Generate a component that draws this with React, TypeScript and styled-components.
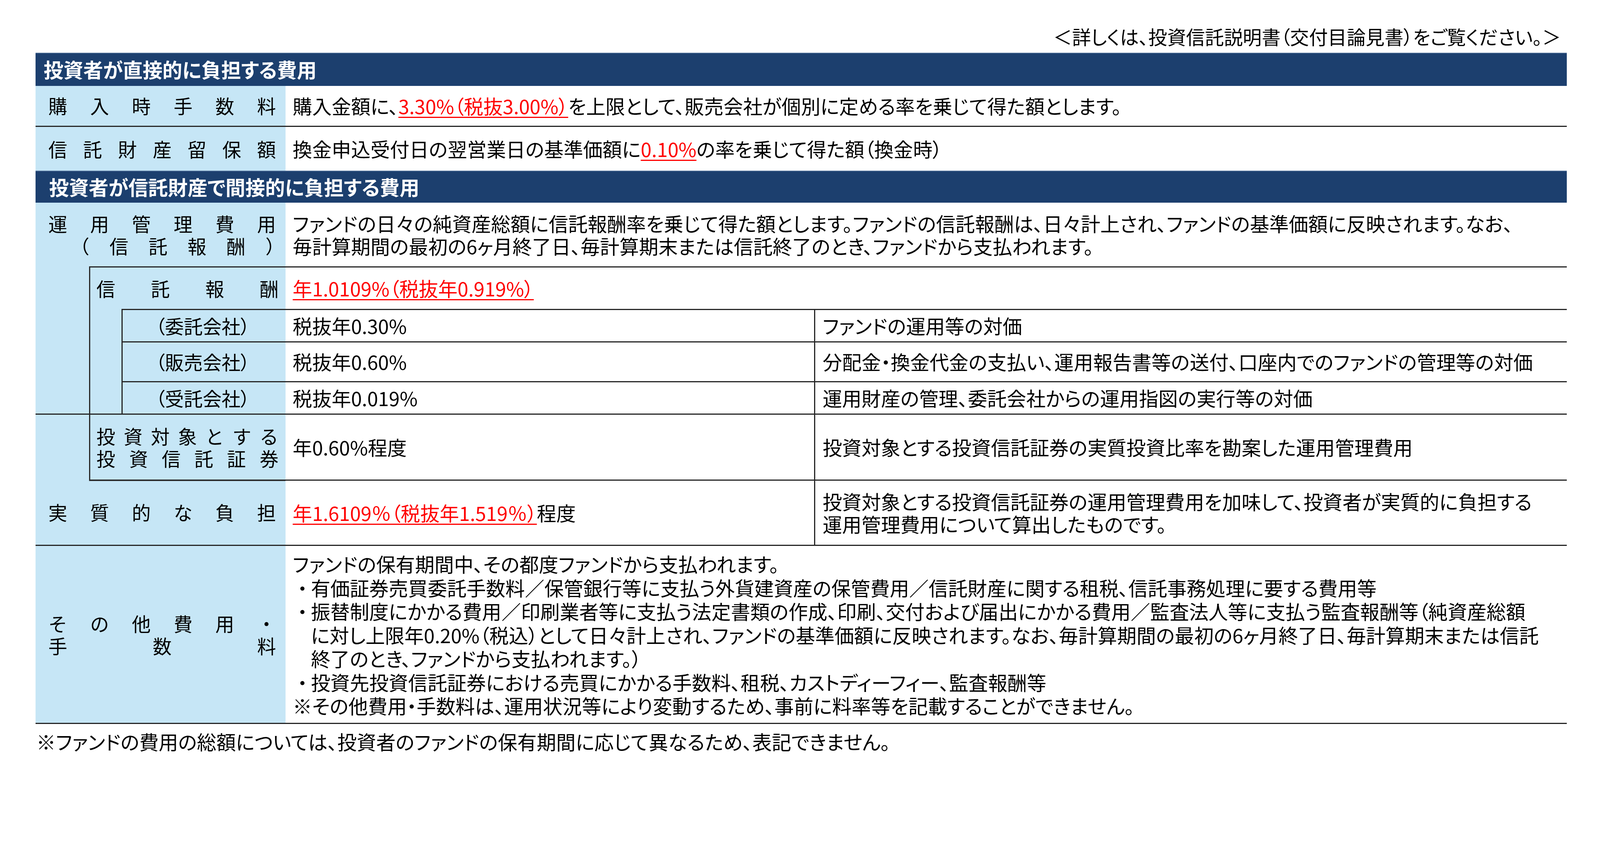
import React from "react";
import styled, { createGlobalStyle, css } from "styled-components";

const NAVY = "#1c3f6e";
const SKY = "#c6e6f6";
const RULE = "#262626";
const RED = "#ff0000";

// sizes are given in picture pixels of a 4400px wide frame; 1rem = 10 of them
const u = (n: number) => `${n / 10}rem`;

const GlobalStyle = createGlobalStyle`
  html { font-size: calc(100vw / 440); }
  html, body { margin: 0; padding: 0; background: #ffffff; }
  body {
    font-family: "Noto Sans CJK JP", "Noto Sans", sans-serif;
    color: #000000;
    overflow: hidden;
  }
`;

type Place = { $c: string; $r: string; $rule?: boolean; $bar?: boolean };

const place = css<Place>`
  grid-column: ${(p) => p.$c};
  grid-row: ${(p) => p.$r};
  border-top: ${(p) => (p.$rule ? `${u(4)} solid ${RULE}` : "0")};
  border-left: ${(p) => (p.$bar ? `${u(4)} solid ${RULE}` : "0")};
`;

const Page = styled.div`
  width: ${u(4211)};
  padding: ${u(70)} 0 ${u(60)} ${u(98)};
  font-size: ${u(53.5)};
  font-weight: 400;
  font-feature-settings: "palt";
`;

const Note = styled.div`
  text-align: right;
  height: ${u(62)};
  line-height: ${u(62)};
  margin: 0 ${u(16)} ${u(13)} 0;
  font-size: ${u(52)};
  white-space: nowrap;
`;

const Table = styled.div`
  display: grid;
  grid-template-columns: ${u(147)} ${u(92)} ${u(448)} ${u(1454)} ${u(2070)};
  grid-template-rows: ${[91, 110, 124, 88, 175, 117, 89, 109, 90, 181, 180, 490].map(u).join(" ")};
  border-bottom: ${u(4)} solid ${RULE};
`;

const Head = styled.div<{ $r: string; $indent: number }>`
  grid-column: 1 / -1;
  grid-row: ${(p) => p.$r};
  background: ${NAVY};
  box-shadow: inset 0 ${u(2)} 0 #55759d;
  color: #ffffff;
  font-size: ${u(54.5)};
  font-weight: 700;
  display: flex;
  align-items: center;
  padding-left: ${(p) => u(p.$indent)};
  white-space: nowrap;
`;

const Label = styled.div<Place & { $nested?: boolean; $ruleFrom?: number }>`
  ${place}
  background: ${(p) =>
    p.$ruleFrom != null
      ? `linear-gradient(${RULE}, ${RULE}) ${u(p.$ruleFrom)} 0 / calc(100% - ${u(p.$ruleFrom)}) ${u(4)} no-repeat, ${SKY}`
      : SKY};
  display: flex;
  flex-direction: column;
  justify-content: center;
  padding: 0 ${(p) => u(p.$nested ? 19 : 26)} 0 ${(p) => u(p.$nested ? 17 : 35)};
  font-size: ${u(52)};
  line-height: ${u(61)};
  font-feature-settings: normal;
`;

const SubLabel = styled.div<Place>`
  ${place}
  background: ${SKY};
  display: flex;
  align-items: center;
  justify-content: center;
  padding-right: ${u(7)};
  font-size: ${u(52)};
  white-space: nowrap;
`;

const Gutter = styled.div<Place & { $barRight?: boolean }>`
  ${place}
  background: ${SKY};
  border-right: ${(p) => (p.$barRight ? `${u(4)} solid ${RULE}` : "0")};
`;

const Cell = styled.div<Place & { $lh?: number }>`
  ${place}
  background: #ffffff;
  display: flex;
  align-items: center;
  padding-left: ${u(20)};
  line-height: ${(p) => u(p.$lh ?? 62)};
  white-space: nowrap;
`;

const Txt = styled.div``;

const Hot = styled.span`
  color: ${RED};
  text-decoration: underline;
  text-decoration-thickness: ${u(3)};
  text-underline-offset: ${u(8)};
`;

const Spread = styled.div<{ $ml?: number; $mr?: number }>`
  display: flex;
  justify-content: space-between;
  margin-left: ${(p) => u(p.$ml ?? 0)};
  margin-right: ${(p) => u(p.$mr ?? 0)};
`;

const Item = styled.div`
  display: grid;
  grid-template-columns: ${u(50)} auto;
`;

const Dot = styled.span`
  font-feature-settings: normal;
`;

const Foot = styled.div`
  margin-top: ${u(17)};
  line-height: ${u(62)};
  padding-left: ${u(2)};
  white-space: nowrap;
`;

function Spaced({ text, ml, mr }: { text: string; ml?: number; mr?: number }) {
  return (
    <Spread $ml={ml} $mr={mr}>
      {Array.from(text).map((ch, i) => (
        <span key={i}>{ch}</span>
      ))}
    </Spread>
  );
}

const shares = [
  { who: "（委託会社）", rate: "税抜年0.30%", note: "ファンドの運用等の対価" },
  {
    who: "（販売会社）",
    rate: "税抜年0.60%",
    note: "分配金・換金代金の支払い、運用報告書等の送付、口座内でのファンドの管理等の対価",
  },
  { who: "（受託会社）", rate: "税抜年0.019%", note: "運用財産の管理、委託会社からの運用指図の実行等の対価" },
];

export default function App() {
  return (
    <>
      <GlobalStyle />
      <Page>
        <Note>＜詳しくは、投資信託説明書（交付目論見書）をご覧ください。＞</Note>
        <Table>
          <Head $r="1" $indent={22}>投資者が直接的に負担する費用</Head>

          <Label $c="1 / 4" $r="2">
            <Spaced text="購入時手数料" />
          </Label>
          <Cell $c="4 / 6" $r="2">
            <Txt>
              購入金額に、<Hot>3.30%（税抜3.00%）</Hot>を上限として、販売会社が個別に定める率を乗じて得た額とします。
            </Txt>
          </Cell>

          <Label $c="1 / 4" $r="3" $rule>
            <Spaced text="信託財産留保額" />
          </Label>
          <Cell $c="4 / 6" $r="3" $rule>
            <Txt>
              換金申込受付日の翌営業日の基準価額に<Hot>0.10%</Hot>の率を乗じて得た額（換金時）
            </Txt>
          </Cell>

          <Head $r="4" $indent={37}>投資者が信託財産で間接的に負担する費用</Head>

          <Label $c="1 / 4" $r="5">
            <Spaced text="運用管理費用" />
            <Spaced text="（信託報酬）" ml={61} mr={-23} />
          </Label>
          <Cell $c="4 / 6" $r="5">
            <Txt>
              ファンドの日々の純資産総額に信託報酬率を乗じて得た額とします。ファンドの信託報酬は、日々計上され、ファンドの基準価額に反映されます。なお、
              <br />
              毎計算期間の最初の6ヶ月終了日、毎計算期末または信託終了のとき、ファンドから支払われます。
            </Txt>
          </Cell>

          <Gutter $c="1 / 2" $r="6 / 10" />
          <Label $c="2 / 4" $r="6" $rule $bar $nested>
            <Spaced text="信託報酬" />
          </Label>
          <Cell $c="4 / 6" $r="6" $rule>
            <Txt>
              <Hot>年1.0109%（税抜年0.919%）</Hot>
            </Txt>
          </Cell>

          <Gutter $c="2 / 3" $r="7 / 10" $bar $barRight />
          {shares.map((s, i) => (
            <React.Fragment key={s.who}>
              <SubLabel $c="3 / 4" $r={String(7 + i)} $rule>
                {s.who}
              </SubLabel>
              <Cell $c="4 / 5" $r={String(7 + i)} $rule>
                <Txt>{s.rate}</Txt>
              </Cell>
              <Cell $c="5 / 6" $r={String(7 + i)} $rule $bar>
                <Txt>{s.note}</Txt>
              </Cell>
            </React.Fragment>
          ))}

          <Gutter $c="1 / 2" $r="10" $rule />
          <Label $c="2 / 4" $r="10" $rule $bar $nested>
            <Spaced text="投資対象とする" />
            <Spaced text="投資信託証券" />
          </Label>
          <Cell $c="4 / 5" $r="10" $rule>
            <Txt>年0.60%程度</Txt>
          </Cell>
          <Cell $c="5 / 6" $r="10" $rule $bar>
            <Txt>投資対象とする投資信託証券の実質投資比率を勘案した運用管理費用</Txt>
          </Cell>

          <Label $c="1 / 4" $r="11" $ruleFrom={147}>
            <Spaced text="実質的な負担" />
          </Label>
          <Cell $c="4 / 5" $r="11" $rule>
            <Txt>
              <Hot>年1.6109％（税抜年1.519％）</Hot>程度
            </Txt>
          </Cell>
          <Cell $c="5 / 6" $r="11" $rule $bar>
            <Txt>
              投資対象とする投資信託証券の運用管理費用を加味して、投資者が実質的に負担する
              <br />
              運用管理費用について算出したものです。
            </Txt>
          </Cell>

          <Label $c="1 / 4" $r="12" $rule>
            <Spaced text="その他費用・" />
            <Spaced text="手数料" />
          </Label>
          <Cell $c="4 / 6" $r="12" $rule $lh={65}>
            <Txt>
              <div>ファンドの保有期間中、その都度ファンドから支払われます。</div>
              <Item>
                <Dot>・</Dot>
                <span>
                  有価証券売買委託手数料／保管銀行等に支払う外貨建資産の保管費用／信託財産に関する租税、信託事務処理に要する費用等
                </span>
              </Item>
              <Item>
                <Dot>・</Dot>
                <span>
                  振替制度にかかる費用／印刷業者等に支払う法定書類の作成、印刷、交付および届出にかかる費用／監査法人等に支払う監査報酬等（純資産総額
                  <br />
                  に対し上限年0.20%（税込）として日々計上され、ファンドの基準価額に反映されます。なお、毎計算期間の最初の6ヶ月終了日、毎計算期末または信託
                  <br />
                  終了のとき、ファンドから支払われます。）
                </span>
              </Item>
              <Item>
                <Dot>・</Dot>
                <span>投資先投資信託証券における売買にかかる手数料、租税、カストディーフィー、監査報酬等</span>
              </Item>
              <div>※その他費用・手数料は、運用状況等により変動するため、事前に料率等を記載することができません。</div>
            </Txt>
          </Cell>
        </Table>
        <Foot>※ファンドの費用の総額については、投資者のファンドの保有期間に応じて異なるため、表記できません。</Foot>
      </Page>
    </>
  );
}
